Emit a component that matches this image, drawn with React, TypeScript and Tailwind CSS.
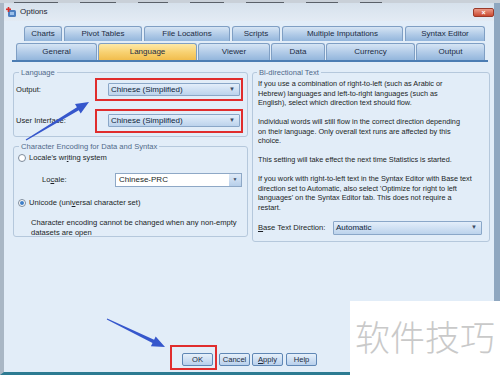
import React from 'react'

const row1 = [
  { label: 'Charts', w: 'w-[38px]' },
  { label: 'Pivot Tables', w: 'w-[78px]' },
  { label: 'File Locations', w: 'w-[86px]' },
  { label: 'Scripts', w: 'w-[48px]' },
  { label: 'Multiple Imputations', w: 'w-[121px]' },
  { label: 'Syntax Editor', w: 'w-[80px]' },
]

const row2 = [
  { label: 'General', w: 'w-[81px]', active: false },
  { label: 'Language', w: 'w-[99px]', active: true },
  { label: 'Viewer', w: 'w-[72px]', active: false },
  { label: 'Data', w: 'w-[54px]', active: false },
  { label: 'Currency', w: 'w-[89px]', active: false },
  { label: 'Output', w: 'w-[69px]', active: false },
]

// bottoms of the menu words that peek out above the dialog
const menuStubs = ['w-[44px]', 'w-[36px]', 'w-[30px]', 'w-[34px]', 'w-[38px]', 'w-[32px]', 'w-[22px]']

const tabBase =
  'flex items-center justify-center rounded-t-[3px] border border-b-0 border-[#7f9fc4] text-[8px] text-[#1c2c44]'

const blueTab = 'bg-gradient-to-b from-[#d6e5f4] via-[#b3cce8] to-[#93b6dc]'
const yellowTab = 'bg-gradient-to-b from-[#fde9a8] via-[#f8d272] to-[#f1bd4c]'

// tapered annotation arrow
function arrowPoints(tx: number, ty: number, px: number, py: number) {
  const dx = px - tx
  const dy = py - ty
  const len = Math.hypot(dx, dy)
  const ux = dx / len
  const uy = dy / len
  const nx = -uy
  const ny = ux
  const head = 13
  const hw = 5.5
  const bx = px - ux * head
  const by = py - uy * head
  const pts = [
    [tx + nx * 0.5, ty + ny * 0.5],
    [bx + nx * 1.8, by + ny * 1.8],
    [bx + nx * hw, by + ny * hw],
    [px, py],
    [bx - nx * hw, by - ny * hw],
    [bx - nx * 1.8, by - ny * 1.8],
    [tx - nx * 0.5, ty - ny * 0.5],
  ]
  return pts.map((p) => p.map((v) => v.toFixed(1)).join(',')).join(' ')
}

function BlueSelect({ value, className }: { value: string; className: string }) {
  return (
    <div
      className={`flex items-center justify-between rounded-[1px] border border-[#8aa7c8] bg-gradient-to-b from-[#e3eefa] to-[#bcd3ec] pl-[2px] pr-[4px] text-[8px] text-[#0f1f3a] ${className}`}
    >
      <span>{value}</span>
      <span className="text-[6px] text-[#3a4a60]">▼</span>
    </div>
  )
}

function Radio({ checked }: { checked: boolean }) {
  return (
    <span className="flex h-[8px] w-[8px] items-center justify-center rounded-full border border-[#7d8b9c] bg-white">
      {checked && <span className="h-[4px] w-[4px] rounded-full bg-[#3f7fc8]" />}
    </span>
  )
}

export default function App() {
  return (
    <div className="relative flex h-[375px] w-[500px] flex-col overflow-hidden bg-[#dfeaf6] font-['Liberation_Sans',Arial,sans-serif] text-[#1b1f26]">
      {/* cut-off menu bar above the dialog */}
      <div className="flex h-[3px] items-end gap-[22px] bg-[#c9d0d8] pl-[14px]">
        {menuStubs.map((w, i) => (
          <div key={i} className={`h-[1px] ${w} bg-[#5a6068]`} />
        ))}
      </div>

      <div className="flex h-[372px] flex-col border-b-[3px] border-l-[4px] border-r-[6px] border-b-[#2d7b92] border-l-[#a9b7c5] border-r-[#8fa7c0] bg-[#e2edf8]">
        {/* title bar */}
        <div className="flex h-[18px] items-center bg-gradient-to-b from-[#d6e1ec] to-[#e3ebf4]">
          <svg width="11" height="11" viewBox="0 0 11 11" className="ml-[2px]">
            <rect x="2" y="3" width="8" height="7" rx="1.5" fill="#4d7fc0" />
            <rect x="4" y="5" width="4" height="3" fill="#9cc0ea" />
            <rect x="0" y="1.5" width="5" height="1.6" fill="#d8302a" />
            <rect x="1.7" y="0" width="1.6" height="5" fill="#d8302a" />
          </svg>
          <span className="ml-[3px] text-[8px] text-[#1d2633]">Options</span>
          <div className="ml-auto flex h-[9px] w-[21px] items-center justify-center rounded-[2px] border border-[#9a3a2a] bg-gradient-to-b from-[#eb9a88] to-[#c9472f] text-[7px] font-bold leading-none text-white">
            ×
          </div>
        </div>

        {/* tabs */}
        <div className="mt-[5px] flex h-[15px] gap-[2px] pl-[20px]">
          {row1.map((t) => (
            <div key={t.label} className={`${tabBase} ${blueTab} ${t.w}`}>
              {t.label}
            </div>
          ))}
        </div>
        <div className="mt-[2px] flex h-[17px] gap-[1px] pl-[12px]">
          {row2.map((t) => (
            <div key={t.label} className={`${tabBase} ${t.active ? yellowTab : blueTab} ${t.w}`}>
              {t.label}
            </div>
          ))}
        </div>
        <div className="ml-[8px] mr-[6px] h-[2px] bg-[#4c7db3]" />

        {/* panel content */}
        <div className="mt-[6px] flex gap-[4px] pl-[9px] text-[7.6px] leading-[9.5px]">
          <div className="flex w-[235px] flex-col">
            <fieldset className="h-[69px] rounded-[3px] border border-[#b5c8dc] px-[2px]">
              <legend className="ml-[3px] px-[2px] text-[7.6px] leading-[9px] text-[#50698a]">Language</legend>
              <div className="mt-[6px] flex h-[13px] items-center">
                <span className="w-[92px]">Output:</span>
                <BlueSelect value="Chinese (Simplified)" className="h-[13px] w-[132px]" />
              </div>
              <div className="mt-[18px] flex h-[13px] items-center">
                <span className="w-[92px]">User Interface:</span>
                <BlueSelect value="Chinese (Simplified)" className="h-[13px] w-[132px]" />
              </div>
            </fieldset>

            <fieldset className="mt-[5px] h-[95px] rounded-[3px] border border-[#b5c8dc] px-[4px]">
              <legend className="ml-[1px] px-[2px] text-[7.6px] leading-[9px] text-[#50698a]">
                Character Encoding for Data and Syntax
              </legend>
              <div className="mt-[2px] flex h-[10px] items-center gap-[3px]">
                <Radio checked={false} />
                <span>
                  Locale's wr<span className="underline">i</span>ting system
                </span>
              </div>
              <div className="mt-[10px] flex h-[14px] items-center">
                <span className="ml-[24px] w-[73px]">
                  Lo<span className="underline">c</span>ale:
                </span>
                <div className="flex h-[14px] w-[127px] items-center justify-between border border-[#8ea8c6] bg-white pl-[3px] text-[8px]">
                  <span>Chinese-PRC</span>
                  <span className="flex h-full w-[12px] items-center justify-center bg-gradient-to-b from-[#dfeaf7] to-[#b7cfea] text-[5px] text-[#3a4a60]">
                    ▼
                  </span>
                </div>
              </div>
              <div className="mt-[11px] flex h-[10px] items-center gap-[3px]">
                <Radio checked />
                <span>
                  Unicode (uni<span className="underline">v</span>ersal character set)
                </span>
              </div>
              <p className="ml-[13px] mt-[10px] leading-[10px]">
                Character encoding cannot be changed when any non-empty
                <br />
                datasets are open
              </p>
            </fieldset>
          </div>

          <fieldset className="h-[174px] w-[238px] rounded-[3px] border border-[#b5c8dc] px-[5px]">
            <legend className="ml-[-1px] px-[2px] text-[7.6px] leading-[9px] text-[#50698a]">Bi-directional Text</legend>
            <div className="mt-[2px] text-[7.3px]">
              <p>
                If you use a combination of right-to-left (such as Arabic or
                <br />
                Hebrew) languages and left-to-right languages (such as
                <br />
                English), select which direction text should flow.
              </p>
              <p className="mt-[9.5px]">
                Individual words will still flow in the correct direction depending
                <br />
                on their language. Only overall text runs are affected by this
                <br />
                choice.
              </p>
              <p className="mt-[9.5px]">This setting will take effect the next time Statistics is started.</p>
              <p className="mt-[9.5px]">
                If you work with right-to-left text in the Syntax Editor with Base text
                <br />
                direction set to Automatic, also select 'Optimize for right to left
                <br />
                languages' on the Syntax Editor tab. This does not require a
                <br />
                restart.
              </p>
            </div>
            <div className="mt-[9px] flex h-[14px] items-center">
              <span className="w-[75px]">
                <span className="underline">B</span>ase Text Direction:
              </span>
              <BlueSelect value="Automatic" className="h-[14px] w-[149px]" />
            </div>
          </fieldset>
        </div>

        <div className="flex-1" />

        {/* dialog buttons */}
        <div className="mb-[6px] flex h-[13px] pl-[178px] text-[7.6px]">
          {[
            { l: 'OK', m: '' },
            { l: 'Cancel', m: 'ml-[6px]' },
            { l: 'Apply', m: 'ml-[2px]' },
            { l: 'Help', m: 'ml-[3px]' },
          ].map((b) => (
            <div
              key={b.l}
              className={`flex w-[31px] items-center justify-center rounded-[2px] border border-[#5f87b5] bg-gradient-to-b from-[#e6f0fa] to-[#b8d0ec] text-[#1c2a3e] ${b.m}`}
            >
              {b.l === 'Apply' ? (
                <span>
                  <span className="underline">A</span>pply
                </span>
              ) : (
                b.l
              )}
            </div>
          ))}
        </div>
      </div>

      {/* annotations over the screenshot */}
      <div className="absolute left-[95px] top-[78px] h-[23px] w-[148px] border-2 border-[#e02d2d]" />
      <div className="absolute left-[95px] top-[109px] h-[24px] w-[148px] border-2 border-[#e02d2d]" />
      <div className="absolute left-[170px] top-[345px] h-[25px] w-[47px] border-2 border-[#e02d2d]" />
      <svg className="pointer-events-none absolute left-0 top-0" width="500" height="375">
        <polygon points={arrowPoints(26, 140, 89, 102)} fill="#3657cc" />
        <polygon points={arrowPoints(107, 319, 165, 347)} fill="#3657cc" />
      </svg>

      {/* watermark */}
      <div className="absolute left-[350px] top-[301px] flex h-[74px] w-[150px] items-center justify-center bg-white">
        <span className="mt-[-6px] font-['Noto_Sans_CJK_SC',sans-serif] text-[35px] font-light leading-none text-[#c9c9c9]">
          软件技巧
        </span>
      </div>
    </div>
  )
}
